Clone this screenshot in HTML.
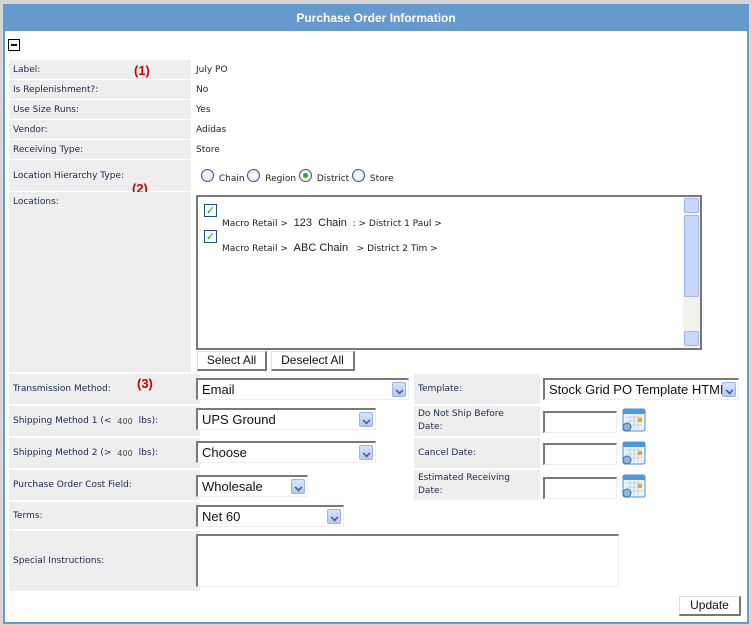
<!DOCTYPE html>
<html><head><style>
*{margin:0;padding:0;box-sizing:border-box}
body{width:752px;height:626px;background:#d6d6d6;position:relative;overflow:hidden;font-family:"DejaVu Sans",Verdana,sans-serif;font-size:9px;color:#1a2850}
.a{position:absolute}
#panel{left:3px;top:4px;width:746px;height:620px;background:#fff;border:2px solid #6a9ad0}
#hdr{left:3px;top:4px;width:746px;height:27px;background:#6699cc;color:#fff;font:bold 12px "Liberation Sans",Arial,sans-serif;text-align:center;line-height:28px}
.l{background:#eeeeee;padding-left:4px;display:flex;align-items:center}
.v{color:#222;display:flex;align-items:center}
.red{color:#c00;font:bold 13px "Liberation Sans",Arial,sans-serif}
.sel{background:#fff;border-top:2px solid #7a7a72;border-left:2px solid #7a7a72;border-right:1px solid #eee;border-bottom:1px solid #eee;font:13px "Liberation Sans",Arial,sans-serif;color:#111;padding-left:4px;line-height:19px}
.arr{position:absolute;right:2px;top:2px;width:14px;height:15px;background:linear-gradient(#d8e4fb,#b3c9f5);border:1px solid #9db3e0;border-radius:2px}
.arr:after{content:"";position:absolute;left:3px;top:4px;width:5px;height:5px;border-right:2px solid #4a5f93;border-bottom:2px solid #4a5f93;transform:rotate(45deg) scale(.8)}
.inp{background:#fff;border-top:2px solid #7a7a72;border-left:2px solid #7a7a72;border-right:1px solid #eee;border-bottom:1px solid #eee}
.btn{background:#fff;border:1px solid #ddd;border-right:2px solid #777;border-bottom:2px solid #777;font:12px "Liberation Sans",Arial,sans-serif;color:#111;text-align:center;line-height:17px}
.rad{display:inline-block;width:13px;height:13px;border-radius:50%;border:1px solid #2f5a8a;background:radial-gradient(#fff,#dde);vertical-align:-1px;margin-right:2px}
.cb{position:absolute;width:13px;height:13px;border:1px solid #1c5180;background:#fff;color:#21a121;font-size:11px;line-height:11px;text-align:center;font-weight:bold}
.cal{position:absolute;width:24px;height:24px}
</style></head><body>
<div id="panel" class="a"></div>
<div id="hdr" class="a">Purchase Order Information</div>
<div class="a" style="left:8px;top:39px;width:12px;height:12px;border:1px solid #000"><div style="position:absolute;left:2px;top:4px;width:6px;height:2px;background:#000"></div></div>

<div class="a l" style="left:9px;top:60px;width:182px;height:19px">Label:</div>
<div class="a red" style="left:134px;top:63px">(1)</div>
<div class="a v" style="left:196px;top:60px;height:19px">July PO</div>
<div class="a l" style="left:9px;top:80px;width:182px;height:19px">Is Replenishment?:</div>
<div class="a v" style="left:196px;top:80px;height:19px">No</div>
<div class="a l" style="left:9px;top:100px;width:182px;height:19px">Use Size Runs:</div>
<div class="a v" style="left:196px;top:100px;height:19px">Yes</div>
<div class="a l" style="left:9px;top:120px;width:182px;height:19px">Vendor:</div>
<div class="a v" style="left:196px;top:120px;height:19px">Adidas</div>
<div class="a l" style="left:9px;top:140px;width:182px;height:19px">Receiving Type:</div>
<div class="a v" style="left:196px;top:140px;height:19px">Store</div>
<div class="a l" style="left:9px;top:160px;width:182px;height:31px">Location Hierarchy Type:</div>
<div class="a red" style="left:132px;top:181px">(2)</div>
<div class="a" style="left:201px;top:169px;color:#222"><span class="rad"></span> Chain <span class="rad"></span> Region <span class="rad" style="background:radial-gradient(#2a2 0,#2a2 2px,#fff 3px,#dde)"></span> District <span class="rad"></span> Store</div>
<div class="a l" style="left:9px;top:192px;width:182px;height:180px;align-items:flex-start;padding-top:5px">Locations:</div>

<div class="a" style="left:196px;top:195px;width:506px;height:155px;border:2px solid #777;background:#fff">
<div class="cb" style="left:6px;top:7px">✓</div>
<div class="a" style="left:24px;top:20px;color:#222">Macro Retail &gt; &nbsp;<span style="font:11px 'Liberation Sans',Arial">123 &nbsp;Chain</span> &nbsp;: &gt; District 1 Paul &gt;</div>
<div class="cb" style="left:6px;top:33px">✓</div>
<div class="a" style="left:24px;top:45px;color:#222">Macro Retail &gt; &nbsp;<span style="font:11px 'Liberation Sans',Arial">ABC Chain</span> &nbsp; &gt; District 2 Tim &gt;</div>
<div class="a" style="right:0;top:0;width:17px;height:151px;background:#f2f2ea">
<div class="a" style="left:1px;top:1px;width:15px;height:15px;background:#c9d8fa;border:1px solid #a2b9e6;border-radius:2px"></div>
<div class="a" style="left:1px;top:18px;width:15px;height:82px;background:#c6d6fb;border:1px solid #a2b9e6;border-radius:2px"></div>
<div class="a" style="left:1px;top:134px;width:15px;height:15px;background:#c9d8fa;border:1px solid #a2b9e6;border-radius:2px"></div>
</div></div>
<div class="a btn" style="left:197px;top:351px;width:70px;height:20px">Select All</div>
<div class="a btn" style="left:271px;top:351px;width:84px;height:20px">Deselect All</div>

<div class="a l" style="left:9px;top:374px;width:191px;height:30px">Transmission Method:</div>
<div class="a red" style="left:137px;top:376px">(3)</div>
<div class="a sel" style="left:196px;top:378px;width:213px;height:22px">Email<div class="arr"></div></div>
<div class="a l" style="left:414px;top:374px;width:126px;height:30px">Template:</div>
<div class="a sel" style="left:543px;top:378px;width:196px;height:22px;white-space:nowrap;overflow:hidden">Stock Grid PO Template HTML<div class="arr"></div></div>

<div class="a l" style="left:9px;top:406px;width:191px;height:30px">Shipping Method 1 (&lt; <span style="font-size:8px;margin:0 6px;color:#444">400</span> lbs):</div>
<div class="a sel" style="left:196px;top:408px;width:180px;height:22px">UPS Ground<div class="arr"></div></div>
<div class="a l" style="left:414px;top:406px;width:126px;height:30px;line-height:13px">Do Not Ship Before<br>Date:</div>
<div class="a inp" style="left:543px;top:411px;width:74px;height:22px"></div>

<div class="a l" style="left:9px;top:438px;width:191px;height:30px">Shipping Method 2 (&gt; <span style="font-size:8px;margin:0 6px;color:#444">400</span> lbs):</div>
<div class="a sel" style="left:196px;top:441px;width:180px;height:22px">Choose<div class="arr"></div></div>
<div class="a l" style="left:414px;top:438px;width:126px;height:30px">Cancel Date:</div>
<div class="a inp" style="left:543px;top:443px;width:74px;height:22px"></div>

<div class="a l" style="left:9px;top:470px;width:191px;height:30px">Purchase Order Cost Field:</div>
<div class="a sel" style="left:196px;top:475px;width:112px;height:22px">Wholesale<div class="arr"></div></div>
<div class="a l" style="left:414px;top:470px;width:126px;height:30px;line-height:13px">Estimated Receiving<br>Date:</div>
<div class="a inp" style="left:543px;top:477px;width:74px;height:22px"></div>

<div class="a l" style="left:9px;top:502px;width:191px;height:27px">Terms:</div>
<div class="a sel" style="left:196px;top:505px;width:148px;height:22px">Net 60<div class="arr"></div></div>
<div class="a l" style="left:9px;top:531px;width:191px;height:60px">Special Instructions:</div>
<div class="a inp" style="left:196px;top:534px;width:423px;height:53px"></div>
<div class="a btn" style="left:679px;top:596px;width:62px;height:20px">Update</div>

<svg class="cal" style="left:622px;top:408px" viewBox="0 0 24 24"><rect x="1" y="1" width="22" height="22" rx="2" fill="#eaf3fd" stroke="#4d8fd0"/><rect x="1" y="1" width="22" height="5" fill="#4b9ae0"/><path d="M4 9h16M4 13h16M4 17h16M8 7v14M12 7v14M16 7v14" stroke="#b8c8e0" stroke-width=".7"/><rect x="16" y="10" width="4" height="4" fill="#f6a21e"/><circle cx="5" cy="19" r="4" fill="#8fb4dc" stroke="#3e6fa3"/></svg>
<svg class="cal" style="left:622px;top:441px" viewBox="0 0 24 24"><rect x="1" y="1" width="22" height="22" rx="2" fill="#eaf3fd" stroke="#4d8fd0"/><rect x="1" y="1" width="22" height="5" fill="#4b9ae0"/><path d="M4 9h16M4 13h16M4 17h16M8 7v14M12 7v14M16 7v14" stroke="#b8c8e0" stroke-width=".7"/><rect x="16" y="10" width="4" height="4" fill="#f6a21e"/><circle cx="5" cy="19" r="4" fill="#8fb4dc" stroke="#3e6fa3"/></svg>
<svg class="cal" style="left:622px;top:474px" viewBox="0 0 24 24"><rect x="1" y="1" width="22" height="22" rx="2" fill="#eaf3fd" stroke="#4d8fd0"/><rect x="1" y="1" width="22" height="5" fill="#4b9ae0"/><path d="M4 9h16M4 13h16M4 17h16M8 7v14M12 7v14M16 7v14" stroke="#b8c8e0" stroke-width=".7"/><rect x="16" y="10" width="4" height="4" fill="#f6a21e"/><circle cx="5" cy="19" r="4" fill="#8fb4dc" stroke="#3e6fa3"/></svg>
</body></html>
